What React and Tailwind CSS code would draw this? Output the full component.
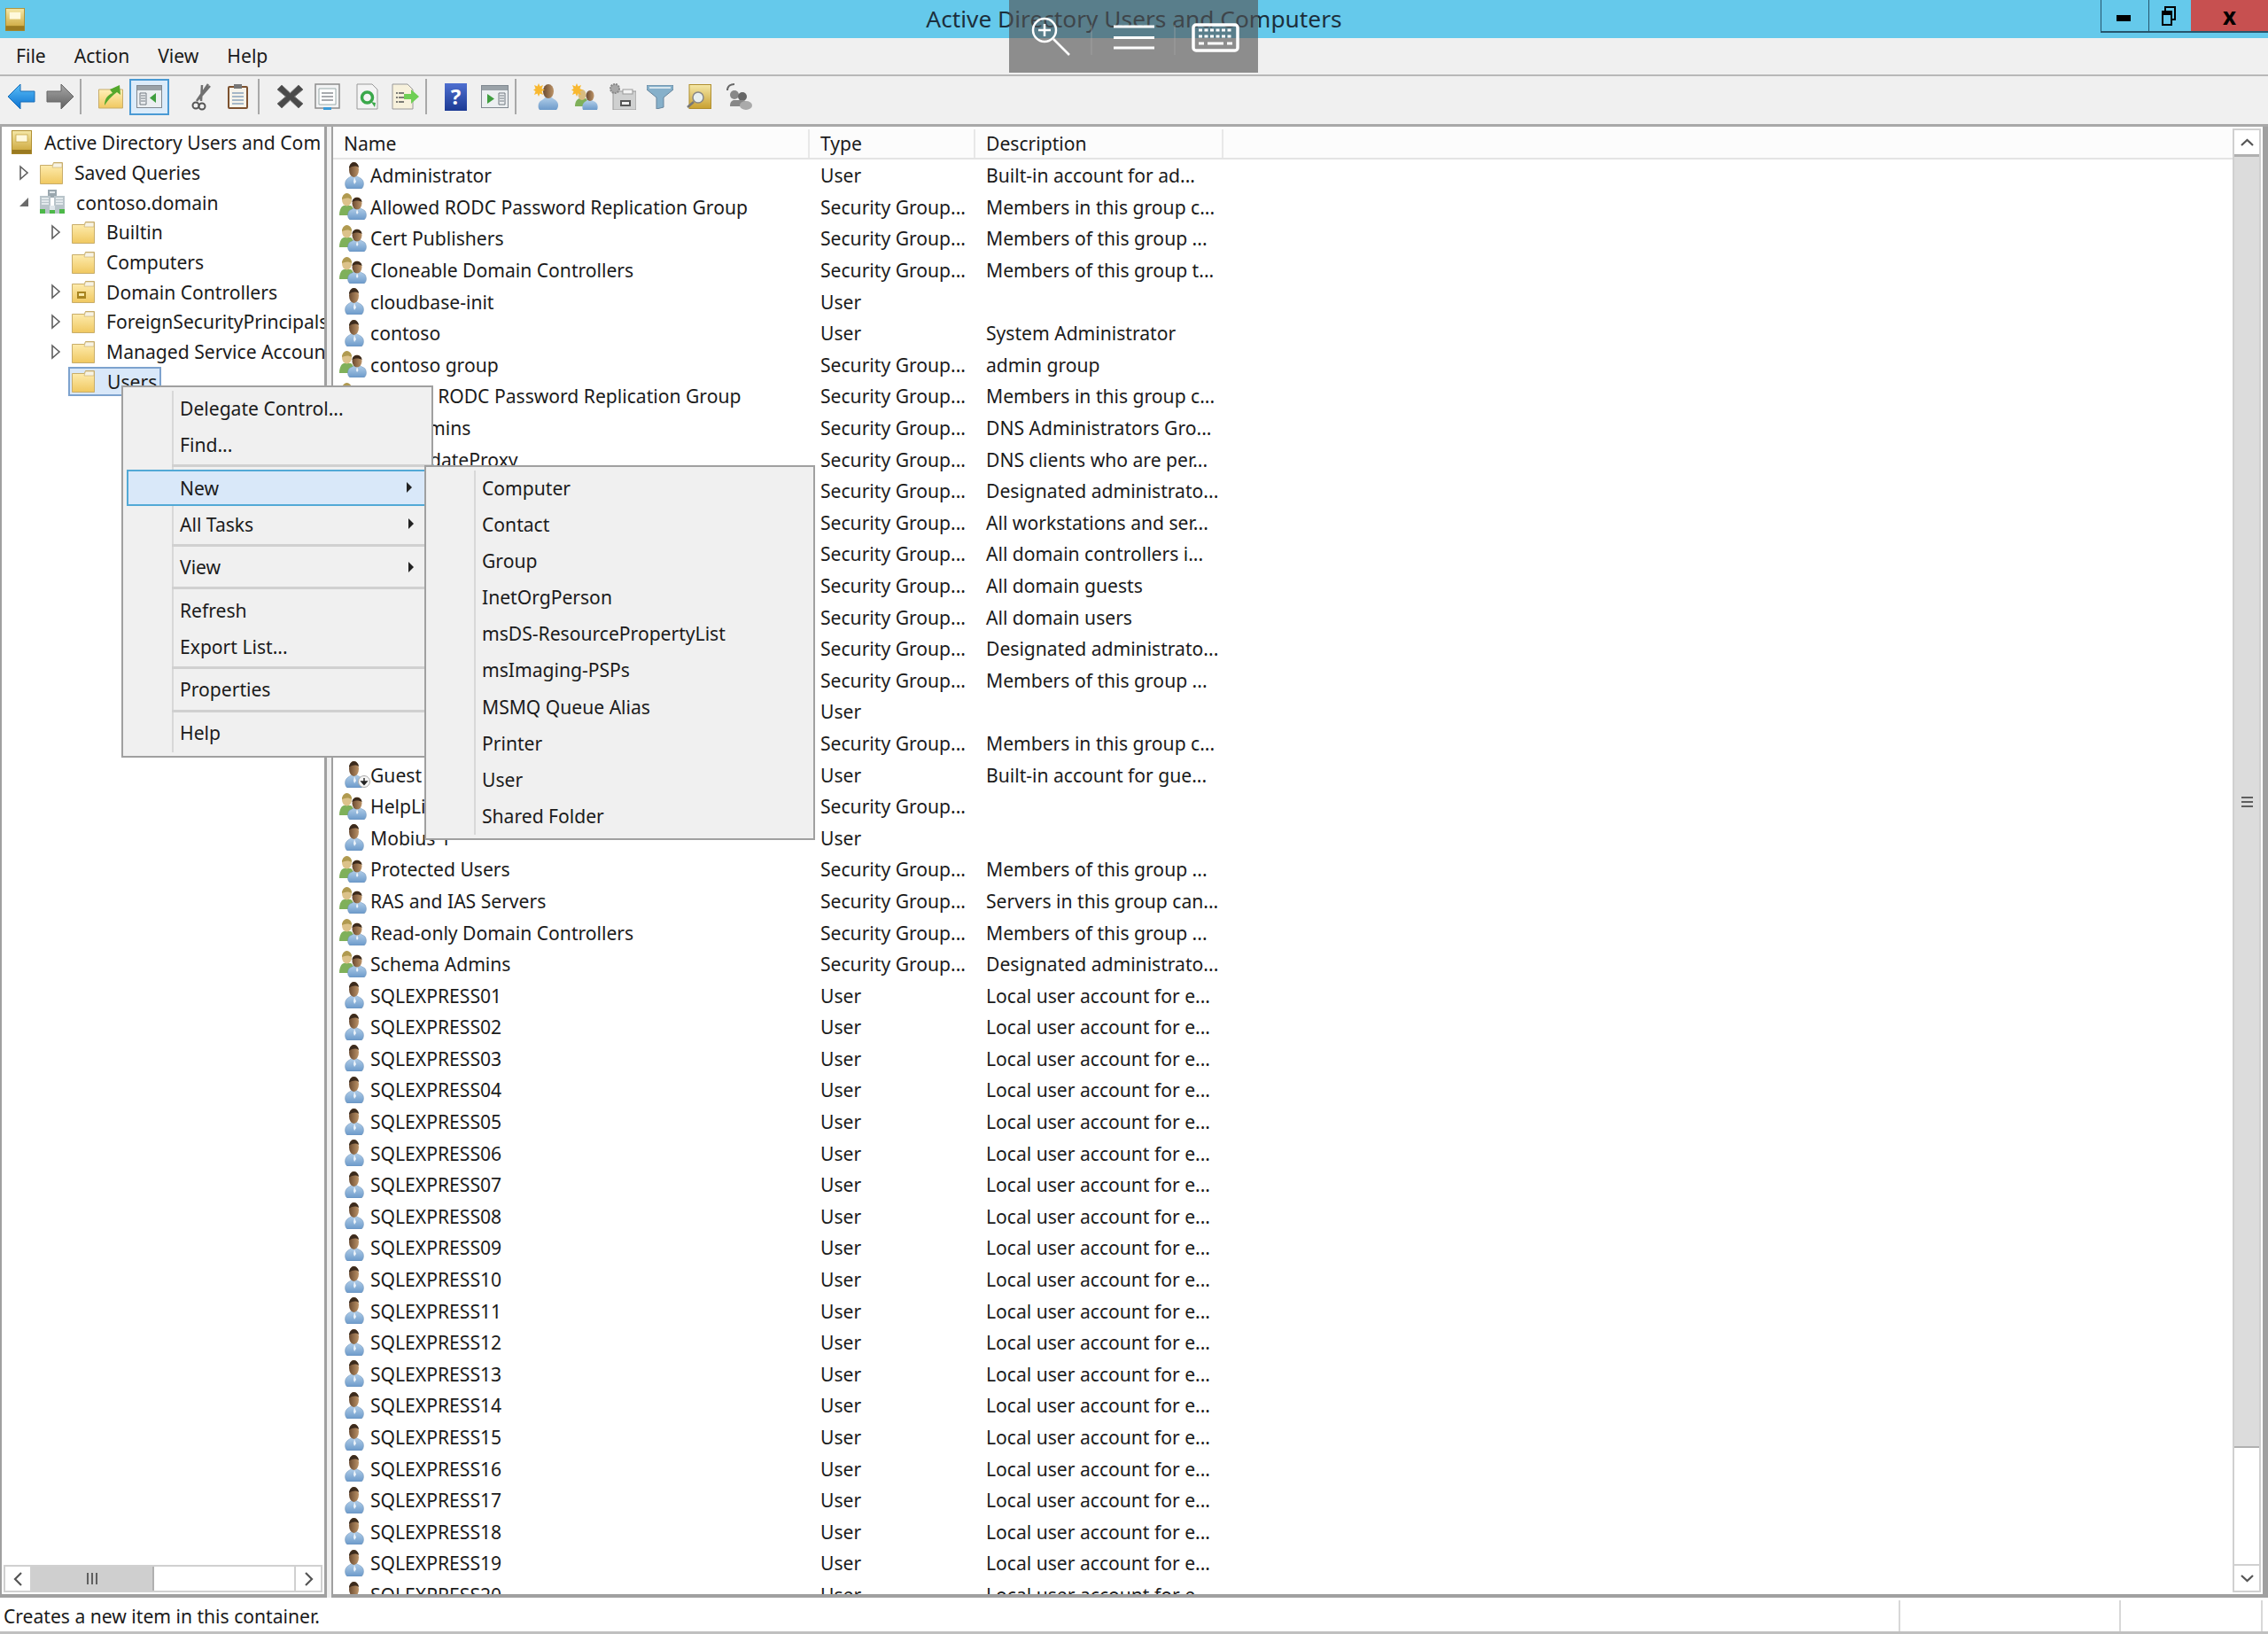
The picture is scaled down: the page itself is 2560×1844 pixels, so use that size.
import React from "react";

const font = { fontFamily: '"Noto Sans", "Open Sans", sans-serif' };

const Defs = () => (
  <svg width="0" height="0" className="absolute">
    <defs>
      <linearGradient id="body" x1="0" y1="0" x2="0" y2="1"><stop offset="0" stopColor="#b4d0ea" /><stop offset="1" stopColor="#6c9aca" /></linearGradient>
      <linearGradient id="skin" x1="0" y1="0" x2="1" y2="0"><stop offset="0" stopColor="#6a4a30" /><stop offset="1" stopColor="#bd9468" /></linearGradient>
      <linearGradient id="folder" x1="0" y1="0" x2="0" y2="1"><stop offset="0" stopColor="#fff0b8" /><stop offset="1" stopColor="#f0c860" /></linearGradient>
      <linearGradient id="snapin" x1="0" y1="0" x2="0" y2="1"><stop offset="0" stopColor="#f5e8a8" /><stop offset="1" stopColor="#c8a030" /></linearGradient>
      <linearGradient id="blueArrow" x1="0" y1="0" x2="0" y2="1"><stop offset="0" stopColor="#5cc0f8" /><stop offset="1" stopColor="#0a70d0" /></linearGradient>
      <linearGradient id="grayArrow" x1="0" y1="0" x2="0" y2="1"><stop offset="0" stopColor="#a8a8a8" /><stop offset="1" stopColor="#606060" /></linearGradient>
    </defs>
  </svg>
);

const UserIcon = ({ guest }) => (
  <svg width="32" height="30" viewBox="0 0 32 30" className="shrink-0">
    <path d="M5 30c-3-2-3-8-1-10 2-3 5-3 6-5h5c1 2 5 2 7 5 2 2 2 8-1 10z" fill="url(#body)" stroke="#6a8fb4" strokeWidth=".5" />
    <ellipse cx="12.500" cy="8.500" rx="5.500" ry="8.500" fill="url(#skin)" />
    <path d="M7 7c0-4 3-7 5.500-7s5.500 3 5.500 6c-3-2-7-2-11 1z" fill="#3b2a1c" />
    <path d="M13 17l2 5-2 3-1-3z" fill="#eef4fa" />
    {guest && (
      <g>
        <circle cx="24" cy="23" r="6.500" fill="#f4f4f4" stroke="#aaa" />
        <path d="M24 19v6M21 23l3 3.500 3-3.500z" stroke="#222" fill="#222" strokeWidth="1.400" />
      </g>
    )}
  </svg>
);

const GroupIcon = () => (
  <svg width="32" height="30" viewBox="0 0 32 30" className="shrink-0">
    <path d="M0 25c0-6 2-10 5-11h8c3 2 4 6 4 11z" fill="#7fb05a" />
    <ellipse cx="8.500" cy="7.500" rx="5.500" ry="7" fill="#dcc28a" />
    <path d="M3 7c0-4 3-7 5.500-7s6 3 5.500 7c-3-2-7-2-11 0z" fill="#b09a50" />
    <path d="M12 30c-3-2-3-7-1-10 2-2 5-2 6-4h6c1 2 4 2 6 4 2 3 2 8-1 10z" fill="url(#body)" stroke="#6a8fb4" strokeWidth=".5" />
    <ellipse cx="20" cy="11.500" rx="5.500" ry="7" fill="url(#skin)" />
    <path d="M14.500 10c0-3 2.500-5 5.500-5s5.500 2 5.500 5c-3-2-8-2-11 0z" fill="#3b2a1c" />
    <path d="M20 18l1.500 4-1.500 2-1-2z" fill="#eef4fa" />
  </svg>
);

const Folder = ({ dc }) => (
  <svg width="26" height="26" viewBox="0 0 26 26" className="shrink-0">
    <path d="M.5 4.500h14l1-3h10v24H.5z" fill="url(#folder)" stroke="#c8ad6a" />
    <path d="M15.500 2h9.500v5h-11z" fill="#f7f3e4" stroke="#c8ad6a" strokeWidth=".6" />
    {dc && <g><rect x="6" y="13" width="10" height="8" fill="#a88420" /><rect x="8" y="15" width="6" height="3" fill="#f8e9a8" /></g>}
  </svg>
);

const SnapIn = ({ w = 23, h = 27 }) => (
  <svg width={w} height={h} viewBox="0 0 23 27" className="shrink-0">
    <rect x=".5" y=".5" width="22" height="26" fill="url(#snapin)" stroke="#b08f30" />
    <rect x="5" y="5" width="13" height="8" fill="#fff9dc" stroke="#c0a040" strokeWidth=".7" />
    <rect x=".5" y="22" width="22" height="4.500" fill="#9a7a20" />
  </svg>
);

const Domain = () => (
  <svg width="28" height="28" viewBox="0 0 28 28" className="shrink-0">
    <rect x="9" y="0" width="10" height="9" fill="#9aa7ae" />
    <rect x="11" y="2" width="6" height="2" fill="#e0e6ea" />
    <rect x="0" y="7" width="12" height="20" fill="#b9c4ca" />
    <rect x="16" y="7" width="12" height="20" fill="#b9c4ca" />
    <path d="M2 10h8M2 13h8M18 10h8M18 13h8M2 16h8M18 16h8" stroke="#f0f4f6" strokeWidth="1.500" />
    <rect x="11" y="18" width="6" height="9" fill="#dfe6ea" />
    <path d="M0 27h6v-5H0zM22 27h6v-5h-6zM11 27h6v-4h-6z" fill="#4cb848" />
  </svg>
);

const ExpandR = () => (
  <svg width="12" height="18" viewBox="0 0 12 18" className="shrink-0"><path d="M2 2l8 7-8 7z" fill="#fff" stroke="#5f5f5f" strokeWidth="1.600" /></svg>
);
const ExpandD = () => (
  <svg width="12" height="14" viewBox="0 0 12 14" className="shrink-0"><path d="M11 2v10H1z" fill="#6a6a6a" /></svg>
);

const TreeRow = ({ indent, expander, icon, label, selected }) => (
  <div className="flex h-[33.7px] items-center whitespace-nowrap" style={{ paddingLeft: indent }}>
    <div className="flex w-[27px] shrink-0 items-center justify-center">{expander === "r" ? <ExpandR /> : expander === "d" ? <ExpandD /> : null}</div>
    <div className={selected ? "ml-[1px] flex h-[33px] items-center gap-[14px] border-2 border-[#7da2ce] bg-[#d9e8f9] pl-[2px] pr-[3px]" : "flex items-center gap-[13px] pl-[5px]"}>
      {icon}
      <span>{label}</span>
    </div>
  </div>
);

const rowsTop = [
  ["u", "Administrator", "User", "Built-in account for ad..."],
  ["g", "Allowed RODC Password Replication Group", "Security Group...", "Members in this group c..."],
  ["g", "Cert Publishers", "Security Group...", "Members of this group ..."],
  ["g", "Cloneable Domain Controllers", "Security Group...", "Members of this group t..."],
  ["u", "cloudbase-init", "User", ""],
  ["u", "contoso", "User", "System Administrator"],
  ["g", "contoso group", "Security Group...", "admin group"],
  ["g", "Denied RODC Password Replication Group", "Security Group...", "Members in this group c..."],
  ["g", "DnsAdmins", "Security Group...", "DNS Administrators Gro..."],
  ["g", "DnsUpdateProxy", "Security Group...", "DNS clients who are per..."],
  ["g", "Domain Admins", "Security Group...", "Designated administrato..."],
  ["g", "Domain Computers", "Security Group...", "All workstations and ser..."],
  ["g", "Domain Controllers", "Security Group...", "All domain controllers i..."],
  ["g", "Domain Guests", "Security Group...", "All domain guests"],
  ["g", "Domain Users", "Security Group...", "All domain users"],
  ["g", "Enterprise Admins", "Security Group...", "Designated administrato..."],
  ["g", "Enterprise Read-only", "Security Group...", "Members of this group ..."],
  ["u", "ExpressAdmin", "User", ""],
  ["g", "Group Policy Creator", "Security Group...", "Members in this group c..."],
  ["x", "Guest", "User", "Built-in account for gue..."],
  ["g", "HelpLibraryUpdaters", "Security Group...", ""],
  ["u", "Mobius 1", "User", ""],
  ["g", "Protected Users", "Security Group...", "Members of this group ..."],
  ["g", "RAS and IAS Servers", "Security Group...", "Servers in this group can..."],
  ["g", "Read-only Domain Controllers", "Security Group...", "Members of this group ..."],
  ["g", "Schema Admins", "Security Group...", "Designated administrato..."],
];
const sql = ["01","02","03","04","05","06","07","08","09","10","11","12","13","14","15","16","17","18","19","20"].map(
  (n) => ["u", "SQLEXPRESS" + n, "User", "Local user account for e..."]
);
const rows = [...rowsTop, ...sql];

const Sep = () => <div className="mx-[7px] h-[40px] w-[2px] shrink-0 bg-[#a8a8a8]" />;

const Toolbar = () => (
  <div className="flex h-[54px] items-center bg-[#f0f0f0] pb-[8px] pl-[9px]">
    <svg width="31" height="30" viewBox="0 0 31 30" className="mr-[12px] shrink-0"><path d="M0 15L14 1v8h16v12H14v8z" fill="url(#blueArrow)" stroke="#1a6fb8" /></svg>
    <svg width="31" height="30" viewBox="0 0 31 30" className="shrink-0"><path d="M31 15L17 1v8H1v12h16v8z" fill="url(#grayArrow)" stroke="#666" /></svg>
    <Sep />
    <svg width="28" height="28" viewBox="0 0 28 28" className="ml-[12px] mr-[7px] shrink-0">
      <path d="M.5 6h27v21H.5z" fill="url(#folder)" stroke="#c8ad6a" />
      <path d="M7 24c0-8 4-12 9-14l-3-4 11-5 1 11-4-3c-4 3-9 7-14 15z" fill="#54a82c" />
    </svg>
    <div className="flex h-[41px] w-[45px] shrink-0 items-center justify-center border-2 border-[#4a9ad4] bg-[#dcecfa]">
      <svg width="29" height="26" viewBox="0 0 29 26"><rect x=".5" y=".5" width="28" height="25" fill="#eceff1" stroke="#808890" /><rect x="1" y="1" width="27" height="5" fill="#9aa2a8" /><path d="M4 9h7v13H4zM5 12h5M5 15h5M5 18h5" fill="none" stroke="#707880" /><path d="M22 9v11l-7-5.500z" fill="#3f9e3f" /></svg>
    </div>
    <svg width="24" height="31" viewBox="0 0 24 31" className="ml-[24px] mr-[18px] shrink-0">
      <path d="M20 1L7 20M22 3L9 18M13 2l-1 18" stroke="#707070" strokeWidth="2.500" fill="none" />
      <circle cx="6" cy="25" r="3.500" fill="none" stroke="#555" strokeWidth="2" /><circle cx="13" cy="26" r="3.500" fill="none" stroke="#555" strokeWidth="2" />
    </svg>
    <svg width="23" height="28" viewBox="0 0 23 28" className="shrink-0">
      <rect x="1" y="3" width="21" height="24" rx="1" fill="#f6f3ea" stroke="#7d5230" strokeWidth="2" />
      <rect x="7" y="0" width="9" height="5" fill="#777" />
      <path d="M5 10h13M5 14h13M5 18h13M5 22h13" stroke="#8aa4bc" strokeWidth="1.400" />
    </svg>
    <div className="ml-[11px] mr-[19px] h-[40px] w-[2px] shrink-0 bg-[#a8a8a8]" />
    <svg width="31" height="30" viewBox="0 0 31 30" className="mr-[12px] shrink-0"><path d="M6 2L15.500 11 25 2 30 7 20.500 15 30 23 25 28 15.500 19 6 28 1 23 10.500 15 1 7z" fill="#4a4a4a" stroke="#777" /></svg>
    <svg width="29" height="30" viewBox="0 0 29 30" className="mr-[18px] shrink-0"><rect x="1" y="1" width="27" height="27" fill="#f2f3f4" stroke="#8c8c8c" strokeWidth="1.500" /><path d="M5 6h19v18H5z" fill="#fff" stroke="#9aa" /><path d="M8 11h13M8 15h13M8 19h13" stroke="#8a8f94" strokeWidth="1.300" /><rect x="10" y="27" width="9" height="3" fill="#3a9ad8" /></svg>
    <svg width="25" height="30" viewBox="0 0 25 30" className="mr-[15px] shrink-0"><path d="M1 1h17l6 6v22H1z" fill="#f4f4f4" stroke="#999" /><circle cx="12.500" cy="16" r="6" fill="none" stroke="#3aa84a" strokeWidth="3.500" /><path d="M17 21l5 1-1 5z" fill="#3aa84a" /></svg>
    <svg width="31" height="30" viewBox="0 0 31 30" className="shrink-0"><path d="M1 1h17l6 6v22H1z" fill="#f7f1dc" stroke="#999" /><path d="M5 11h9M5 16h9M5 21h9" stroke="#555" strokeWidth="1.500" strokeDasharray="2 1 6 0" /><path d="M14 12h8V7l9 8-9 8v-5h-8z" fill="#6fcf55" /></svg>
    <div className="ml-[7px] mr-[20px] h-[40px] w-[2px] shrink-0 bg-[#a8a8a8]" />
    <div className="mr-[16px] flex h-[31px] w-[25px] shrink-0 items-center justify-center bg-gradient-to-b from-[#4f6fd0] to-[#1c3a94] text-[24px] font-bold leading-none text-white" style={font}>?</div>
    <svg width="31" height="26" viewBox="0 0 31 26" className="shrink-0"><rect x=".5" y=".5" width="30" height="25" fill="#eceff1" stroke="#808890" /><rect x="1" y="1" width="29" height="5" fill="#9aa2a8" /><path d="M7 10v11l8-5.500z" fill="#3f9e3f" /><path d="M20 9h7v13h-7zM21 12h5M21 15h5M21 18h5" fill="none" stroke="#707880" /></svg>
    <Sep />
    <svg width="30" height="30" viewBox="0 0 30 30" className="ml-[12px] mr-[13px] shrink-0">
      <path d="M7 30c-2-2-2-8 1-10 3-2 5-3 6-5h6c1 2 5 3 7 6 2 3 1 7-1 9z" fill="url(#body)" />
      <ellipse cx="17" cy="9" rx="6" ry="8" fill="url(#skin)" />
      <path d="M6 0l1.500 3.500L11 2l-1.500 4L13 7.500 9.500 9l1.500 4-3.500-1.500L6 15l-1.500-3.500L1 13l1.500-4L0 7.500 2.500 6 1 2l3.500 1.500z" fill="#f8b830" />
    </svg>
    <svg width="30" height="30" viewBox="0 0 30 30" className="mr-[13px] shrink-0">
      <path d="M4 26c0-5 2-8 5-9h7c3 2 3 6 3 9z" fill="#7fb05a" />
      <ellipse cx="12" cy="13" rx="4.500" ry="6" fill="#d8bc80" />
      <path d="M13 30c-1-2-1-6 1-8 2-2 3-2 4-3h5c1 1 3 1 5 3 2 2 2 6 1 8z" fill="url(#body)" />
      <ellipse cx="21" cy="14" rx="4.500" ry="6" fill="url(#skin)" />
      <path d="M6 0l1.500 3.500L11 2l-1.500 4L13 7.500 9.500 9l1.500 4-3.500-1.500L6 15l-1.500-3.500L1 13l1.500-4L0 7.500 2.500 6 1 2l3.500 1.500z" fill="#f8b830" />
    </svg>
    <svg width="30" height="30" viewBox="0 0 30 30" className="mr-[12px] shrink-0">
      <rect x="4" y="9" width="26" height="21" fill="#cfd0d0" stroke="#999" />
      <rect x="15" y="7" width="11" height="5" fill="#f4f4f4" stroke="#999" />
      <rect x="12" y="19" width="12" height="7" fill="#555" /><rect x="14" y="21" width="8" height="3" fill="#eee" />
      <circle cx="6" cy="6" r="5" fill="#a8a8a8" stroke="#888" strokeDasharray="2 1" strokeWidth="2" />
    </svg>
    <svg width="30" height="27" viewBox="0 0 30 27" className="mr-[15px] shrink-0"><path d="M0 0h30v5L19 14v11l-8 2V14L0 5z" fill="#86b0ca" stroke="#66849c" /><path d="M3 3h24" stroke="#d8e6ee" strokeWidth="2" /></svg>
    <svg width="28" height="28" viewBox="0 0 28 28" className="mr-[15px] shrink-0"><rect x="3" y=".5" width="24.500" height="27" fill="url(#snapin)" stroke="#b08f30" /><circle cx="13" cy="15" r="6" fill="#e8f0f0" stroke="#888" strokeWidth="1.500" /><path d="M8 20l-7 6" stroke="#777" strokeWidth="2.500" /></svg>
    <svg width="31" height="30" viewBox="0 0 31 30" className="shrink-0">
      <path d="M3 8c0-5 4-7 8-7" fill="none" stroke="#666" strokeWidth="2" />
      <circle cx="11" cy="13" r="5" fill="#888" /><circle cx="20" cy="15" r="5" fill="#666" />
      <path d="M6 26c0-5 2-7 5-7h9c3 0 5 2 5 5v2z" fill="#888" /><ellipse cx="24" cy="25" rx="7" ry="5" fill="#aaa" />
    </svg>
  </div>
);

const HGrip = () => (
  <div className="flex gap-[3px]"><div className="h-[13px] w-[2px] bg-[#5f5f5f]" /><div className="h-[13px] w-[2px] bg-[#5f5f5f]" /><div className="h-[13px] w-[2px] bg-[#5f5f5f]" /></div>
);

const MItem = ({ children, arrow, active, x = 66 }) => (
  <div className={"flex h-[41px] items-center whitespace-nowrap " + (active ? "border-2 border-[#52a9d6] bg-[#d9e8f9]" : "")} style={{ paddingLeft: active ? x - 8 : x - 6 }}>
    <span className="flex-1">{children}</span>
    {arrow && (
      <svg width="8" height="14" viewBox="0 0 8 14" className="mr-[19px]"><path d="M1 1l6 6-6 6z" fill="#222" /></svg>
    )}
  </div>
);
const MSep = () => <div className="my-[2.3px] ml-[51px] h-[3px] bg-[#d0d0d0]" />;

const submenu = ["Computer","Contact","Group","InetOrgPerson","msDS-ResourcePropertyList","msImaging-PSPs","MSMQ Queue Alias","Printer","User","Shared Folder"];

export default function App() {
  return (
    <div className="relative flex h-[1844px] w-[2560px] flex-col overflow-hidden bg-white text-[21.1px] leading-none text-[#1b1b1b]" style={font}>
      <Defs />
      {/* Title bar */}
      <div className="relative flex h-[43px] shrink-0 items-center justify-center bg-[#65c9eb] text-[26.3px] text-[#1c2f3c]">
        <svg width="22" height="30" viewBox="0 0 23 27" className="absolute left-[6px] top-[7px]"><rect x=".5" y=".5" width="22" height="26" fill="url(#snapin)" stroke="#b08f30" /><rect x="5" y="5" width="13" height="8" fill="#fff9dc" /><rect x=".5" y="21" width="22" height="5.500" fill="#9a7a20" /></svg>
        <span>Active Directory Users and Computers</span>
        <div className="absolute right-0 top-0 flex h-[37px] border-b-2 border-[#26566e]">
          <div className="flex w-[54px] items-center justify-center border-l border-[#26566e] pr-[3px]"><div className="mt-[6px] h-[7px] w-[16px] bg-black" /></div>
          <div className="flex w-[48px] items-center justify-center border-l border-[#26566e] pr-[4px]">
            <svg width="16" height="22" viewBox="0 0 16 22"><rect x="4" y="1" width="11" height="14" fill="none" stroke="#000" strokeWidth="2" /><rect x="1" y="6" width="10" height="15" fill="#65c9eb" stroke="#000" strokeWidth="2" /><rect x="1" y="6" width="10" height="4" /></svg>
          </div>
          <div className="flex w-[87px] items-center justify-center bg-[#c75050] text-[26px] font-bold text-black">x</div>
        </div>
      </div>
      {/* Menu bar */}
      <div className="flex h-[41px] shrink-0 items-center gap-[32px] bg-[#f0f0f0] pb-[2px] pl-[18px]">
        <span>File</span><span>Action</span><span>View</span><span>Help</span>
      </div>
      <div className="h-[2px] shrink-0 bg-[#b8b8b8]" />
      <Toolbar />
      {/* Panels */}
      <div className="flex h-[1663px] shrink-0 border-t-[3px] border-[#a8a8a8] bg-[#f0f0f0]">
        <div className="flex w-[369px] shrink-0 flex-col overflow-hidden border-l-2 border-r-[3px] border-b-[4px] border-[#a0a0a0] bg-white">
          <div className="min-h-0 flex-1 overflow-hidden pt-[1px]">
            <div className="flex h-[33.7px] items-center gap-[14px] whitespace-nowrap pl-[11px]"><SnapIn />Active Directory Users and Com</div>
            <TreeRow indent={11} expander="r" icon={<Folder />} label="Saved Queries" />
            <TreeRow indent={11} expander="d" icon={<Domain />} label="contoso.domain" />
            <TreeRow indent={47} expander="r" icon={<Folder />} label="Builtin" />
            <TreeRow indent={47} icon={<Folder />} label="Computers" />
            <TreeRow indent={47} expander="r" icon={<Folder dc />} label="Domain Controllers" />
            <TreeRow indent={47} expander="r" icon={<Folder />} label="ForeignSecurityPrincipals" />
            <TreeRow indent={47} expander="r" icon={<Folder />} label="Managed Service Accounts" />
            <TreeRow indent={47} icon={<Folder />} label="Users" selected />
          </div>
          <div className="mx-[2px] mb-[2px] flex h-[31px] shrink-0 items-stretch border-2 border-[#d0d0d0] bg-white text-[#555]">
            <div className="flex w-[30px] items-center justify-center border-r-2 border-[#d0d0d0]"><svg width="11" height="16" viewBox="0 0 11 16"><path d="M9 1L2 8l7 7" fill="none" stroke="#555" strokeWidth="2.200" /></svg></div>
            <div className="flex w-[138px] items-center justify-center border-r-2 border-[#b0b0b0] bg-[#cfcfcf]"><HGrip /></div>
            <div className="flex-1" />
            <div className="flex w-[30px] items-center justify-center border-l-2 border-[#d0d0d0]"><svg width="11" height="16" viewBox="0 0 11 16"><path d="M2 1l7 7-7 7" fill="none" stroke="#555" strokeWidth="2.200" /></svg></div>
          </div>
        </div>
        <div className="w-[5px] shrink-0 bg-[#f0f0f0]" />
        <div className="relative flex min-w-0 flex-1 border-l-2 border-r-[6px] border-b-[4px] border-[#a0a0a0] bg-white">
          <div className="min-w-0 flex-1 overflow-hidden pt-[2px]">
            <div className="flex h-[35px] border-b-2 border-[#e4e4e4] bg-[#fcfcfc] pt-[1px]">
              <div className="flex w-[538px] shrink-0 items-center border-r-2 border-[#e8e8e8] pl-[12px]">Name</div>
              <div className="flex w-[187px] shrink-0 items-center border-r-2 border-[#e8e8e8] pl-[12px]">Type</div>
              <div className="flex w-[280px] shrink-0 items-center border-r-2 border-[#e8e8e8] pl-[12px]">Description</div>
              <div className="flex-1" />
            </div>
            {rows.map((r, i) => (
              <div key={i} className="flex h-[35.6px] items-center whitespace-nowrap">
                <div className="flex w-[538px] shrink-0 items-center pl-[7px]">
                  <div className="w-[35px] shrink-0">{r[0] === "g" ? <GroupIcon /> : <div className="pl-[4px]"><UserIcon guest={r[0] === "x"} /></div>}</div>
                  <span>{r[1]}</span>
                </div>
                <div className="w-[187px] shrink-0 pl-[12px]">{r[2]}</div>
                <div className="w-[280px] shrink-0 pl-[12px]">{r[3]}</div>
              </div>
            ))}
          </div>
          {/* Vertical scrollbar */}
          <div className="my-[2px] mr-[2px] flex w-[32px] shrink-0 flex-col border-2 border-[#d0d0d0] bg-white">
            <div className="flex h-[30px] shrink-0 items-center justify-center border-b-[3px] border-[#b0b0b0]"><svg width="15" height="10" viewBox="0 0 15 10"><path d="M1 8l6.500-6 6.500 6" fill="none" stroke="#555" strokeWidth="2.200" /></svg></div>
            <div className="flex h-[1457px] shrink-0 items-center justify-center border-b-2 border-[#b0b0b0] bg-[#dcdcdc]">
              <div className="flex flex-col gap-[3px]"><div className="h-[2px] w-[13px] bg-[#5f5f5f]" /><div className="h-[2px] w-[13px] bg-[#5f5f5f]" /><div className="h-[2px] w-[13px] bg-[#5f5f5f]" /></div>
            </div>
            <div className="flex-1" />
            <div className="flex h-[30px] shrink-0 items-center justify-center border-t-2 border-[#d0d0d0]"><svg width="15" height="10" viewBox="0 0 15 10"><path d="M1 2l6.500 6 6.500-6" fill="none" stroke="#555" strokeWidth="2.200" /></svg></div>
          </div>
        </div>
      </div>
      {/* Status bar */}
      <div className="flex min-h-0 flex-1 border-b-[3px] border-[#c0c0c0] bg-white pt-[3px]">
        <div className="flex flex-1 items-center pl-[4px]">Creates a new item in this container.</div>
        <div className="w-[249px] border-l-2 border-[#d8d8d8]" />
        <div className="w-[160px] border-l-2 border-[#d8d8d8]" />
        <div className="w-[8px] border-l-2 border-[#d8d8d8]" />
      </div>

      {/* Context menu */}
      <div className="absolute left-[137px] top-[435px] z-10 w-[352px] border-2 border-[#a0a0a0] bg-[#f0f0f0] pb-[6px] pl-[4px] pt-[3px]">
        <div className="absolute bottom-[4px] left-[55px] top-[4px] w-[2px] bg-[#d8d8d8]" />
        <div className="relative">
          <MItem>Delegate Control...</MItem>
          <MItem>Find...</MItem>
          <MSep />
          <MItem active arrow>New</MItem>
          <MItem arrow>All Tasks</MItem>
          <MSep />
          <MItem arrow>View</MItem>
          <MSep />
          <MItem>Refresh</MItem>
          <MItem>Export List...</MItem>
          <MSep />
          <MItem>Properties</MItem>
          <MSep />
          <MItem>Help</MItem>
        </div>
      </div>
      {/* Submenu */}
      <div className="absolute left-[479px] top-[525px] z-20 w-[441px] border-2 border-[#a0a0a0] bg-[#f0f0f0] pb-[5px] pt-[3px]">
        <div className="absolute bottom-[4px] left-[54px] top-[4px] w-[2px] bg-[#d8d8d8]" />
        {submenu.map((s) => (
          <div key={s} className="flex h-[41.1px] items-center pl-[63px]">{s}</div>
        ))}
      </div>
      {/* Remote control overlay */}
      <div className="absolute left-[1139px] top-0 z-30 flex h-[82px] w-[281px] items-center bg-[#535353]/[.63]">
        <svg width="281" height="82" viewBox="0 0 281 82">
          <circle cx="40" cy="34" r="13" fill="none" stroke="#fff" strokeWidth="2.500" />
          <path d="M33 34h14M40 27v14M50 44l18 18" stroke="#fff" strokeWidth="2.500" />
          <path d="M93 28v34M187 28v34" stroke="#aaa" strokeWidth="1" opacity=".6" />
          <path d="M118 30h46M118 42.500h46M118 54h46" stroke="#fff" strokeWidth="3" />
          <rect x="208" y="28" width="50" height="29" rx="3" fill="none" stroke="#fff" strokeWidth="3.500" />
          <path d="M214 34h38M214 41h38" stroke="#fff" strokeWidth="3" strokeDasharray="4 2.500" />
          <path d="M214 49h6M224 49h18M246 49h6" stroke="#fff" strokeWidth="3" />
        </svg>
      </div>
    </div>
  );
}
